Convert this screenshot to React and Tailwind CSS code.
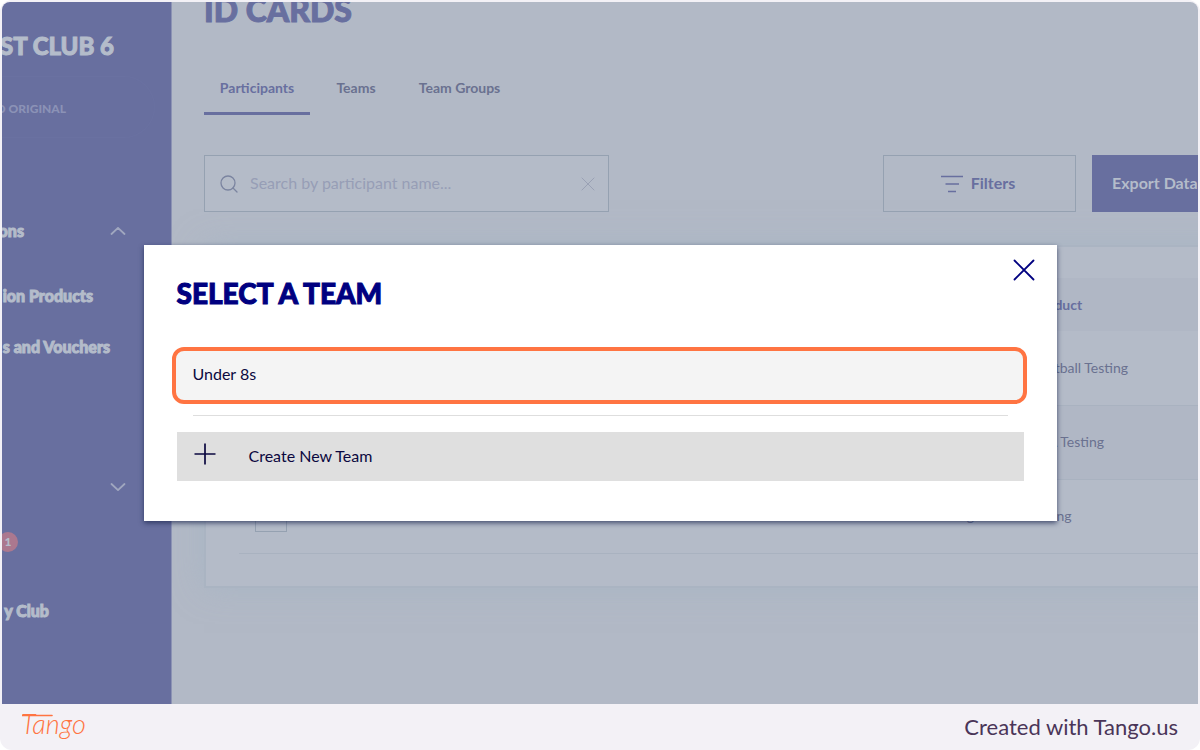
import React from "react";

const rows = [
  { product: "Membership Football Testing", tint: false },
  { product: "Membership CFA Testing", tint: true },
  { product: "Registration Testing", tint: false },
];

function Cross({ className, width }) {
  return (
    <svg className={className} viewBox="0 0 22 22" fill="none" stroke="currentColor" strokeWidth={width} strokeLinecap="round" aria-hidden="true">
      <path d="M1.5 1.5 20.5 20.5M20.5 1.5 1.5 20.5" />
    </svg>
  );
}

function Chevron({ up }) {
  return (
    <svg className="h-2 w-4 shrink-0 text-[#a0a7bf]" viewBox="0 0 16 8" fill="none" stroke="currentColor" strokeWidth="1.8" strokeLinecap="round" strokeLinejoin="round" aria-hidden="true">
      <path d={up ? "M1.5 7 8 .9 14.5 7" : "M1.5 1 8 7.1 14.5 1"} />
    </svg>
  );
}

function TangoLogo() {
  return (
    <svg className="h-[34px] w-[70px]" viewBox="0 0 70 34" fill="#ff7442" role="img" aria-label="Tango">
      <text x="-1" y="24" fontFamily="Lato, sans-serif" fontSize="27" fontStyle="italic" fontWeight="300">Tango</text>
      <path d="M0 5.500H30" stroke="#ff7442" strokeWidth="1.6" strokeLinecap="round" />
    </svg>
  );
}

function Sidebar() {
  return (
    <aside className="flex w-[170px] shrink-0 flex-col overflow-hidden border-r border-[#8c93b4] bg-[#686f9f] text-base font-black whitespace-nowrap text-[#b4bcca]">
      <div className="flex h-[74px] items-center justify-end pt-[14px] pr-[57px] text-2xl [-webkit-text-stroke:1px_currentColor]">ST CLUB 6</div>
      <div className="mr-[16px] flex h-[62px] items-center justify-end rounded-r-full border border-l-0 border-[#6a71a1] pt-1 pr-[88px] text-xs text-[#8b92b6]">
        D ORIGINAL
      </div>
      <nav className="flex flex-col [-webkit-text-stroke:1px_currentColor]">
        <button type="button" aria-label="Toggle section" className="mt-[81px] flex h-6 items-center pr-[45px]">
          <span className="flex w-[22px] justify-end">ons</span>
          <span className="ml-auto flex"><Chevron up /></span>
        </button>
        <a href="#products" className="mt-[41px] flex h-6 items-center justify-end pr-[78px]">ion Products</a>
        <a href="#vouchers" className="mt-[27px] flex h-6 items-center justify-end pr-[61px]">s and Vouchers</a>
        <button type="button" aria-label="Expand section" className="mt-[116px] flex h-6 items-center justify-end pr-[45px]">
          <Chevron />
        </button>
        <a href="#notifications" className="mt-[33px] -ml-1 flex size-5 items-center justify-center rounded-full bg-[#ab788f] text-xs [-webkit-text-stroke:0]">1</a>
        <a href="#club" className="mt-[47px] flex h-6 items-center justify-end pr-[122px]">y Club</a>
      </nav>
    </aside>
  );
}

function Background() {
  return (
    <main className="min-w-0 flex-1 overflow-hidden bg-[#b2b9c6] pl-8 text-[#6a7190]">
      <div className="-mr-[35px]">
        <h1 className="-mt-3 text-[32px] leading-[40px] font-black text-[#686f9f] [-webkit-text-stroke:1px_currentColor]">ID CARDS</h1>
        <div role="tablist" className="mt-[31px] flex text-sm font-bold">
          <button type="button" role="tab" aria-selected="true" className="h-[54px] w-[106px] border-b-3 border-[#686f9f] pt-[2px] text-[#686f9f]">Participants</button>
          <button type="button" role="tab" aria-selected="false" className="h-[54px] w-[92px] border-b-3 border-transparent pt-[2px]">Teams</button>
          <button type="button" role="tab" aria-selected="false" className="h-[54px] w-[115px] border-b-3 border-transparent pt-[2px]">Team Groups</button>
        </div>
        <div className="mt-[40px] flex gap-4">
          <div className="flex h-[57px] w-[405px] items-center border border-[#95a1b1] bg-[#b4bbc8] px-[15px]">
            <svg className="size-[18px] shrink-0 text-[#7b84a0]" viewBox="0 0 18 18" fill="none" stroke="currentColor" strokeWidth="1.3" strokeLinecap="round" aria-hidden="true">
              <circle cx="8" cy="8" r="7" />
              <path d="m13 13 4 4" />
            </svg>
            <input type="text" aria-label="Search by participant name" placeholder="Search by participant name..." className="ml-3 min-w-0 flex-1 bg-transparent pb-[2px] text-base outline-none placeholder:text-[#979eb6]" />
            <button type="button" aria-label="Clear search" className="mr-[-2px] p-0"><Cross className="size-[14px] text-[#98a0b3]" width="1.5" /></button>
          </div>
          <button type="button" className="ml-auto flex h-[57px] w-[193px] items-center justify-center gap-2 border border-[#95a1b1] pr-[3px] pb-[2px] text-base font-bold text-[#686f9f]">
            <svg className="mt-[2px] h-[18px] w-[22px]" viewBox="0 0 22 18" stroke="currentColor" strokeWidth="1.5" aria-hidden="true">
              <path d="M0 1.5h22M4.5 9h13.500M7 16.500h8" />
            </svg>
            Filters
          </button>
          <button type="button" className="h-[57px] w-[141px] bg-[#686f9f] pb-[2px] pl-5 text-left text-base font-bold text-[#b4bcca]">Export Data</button>
        </div>
        <div className="mt-[33px] border-2 border-[#aab4c2] bg-[#b4bbc8] pt-[31px] pb-8 pl-[33px] shadow-[0_0_30px_rgba(160,178,194,0.55)]">
          <table className="w-full table-fixed border-collapse text-left text-sm">
            <thead>
              <tr className="h-[53px] bg-[#b0b7c5] text-[#686f9f]">
                <th className="w-[712px]" aria-label="Select" />
                <th className="font-bold">Membership Product</th>
              </tr>
            </thead>
            <tbody>
              {rows.map((row) => (
                <tr key={row.product} className={row.tint ? "h-[74px] border-b border-[#a9b2c0] bg-[#b0b7c5]" : "h-[74px] border-b border-[#a9b2c0]"}>
                  <td className="pl-4">
                    <input type="checkbox" aria-label={row.product} className="block size-8 appearance-none border border-[#95a1b1]" />
                  </td>
                  <td className="whitespace-nowrap">{row.product}</td>
                </tr>
              ))}
            </tbody>
          </table>
        </div>
      </div>
    </main>
  );
}

function TeamDialog() {
  return (
    <div className="absolute inset-0 flex items-start justify-center pt-[243px]">
      <section role="dialog" aria-labelledby="dialog-title" className="w-[913px] max-w-full bg-white px-[33px] pb-10 text-base text-[#0b0840] shadow-[0_2px_5px_rgba(30,40,80,0.75)]">
        <header className="flex items-start justify-between pt-[14px]">
          <h2 id="dialog-title" className="pt-[14px] text-[28px] leading-[40px] font-black text-[#000080] [-webkit-text-stroke:1px_currentColor]">SELECT A TEAM</h2>
          <button type="button" aria-label="Close" className="-mr-[11px]"><Cross className="size-[22px] text-[#000080]" width="1.8" /></button>
        </header>
        <button type="button" className="-mx-[5px] mt-[34px] block h-[57px] w-[calc(100%+8px)] rounded-xl border-4 border-[#ff7442] bg-[#f4f4f4] px-[17px] pb-1 text-left">Under 8s</button>
        <hr className="mx-4 mt-[11px] border-[#dedede]" />
        <button type="button" className="mt-4 flex h-[49px] w-full items-center bg-[#dfdfdf] pb-[2px] pl-[17px] text-left">
          <svg className="mb-1 size-[22px]" viewBox="0 0 22 22" stroke="currentColor" strokeWidth="1.7" aria-hidden="true">
            <path d="M0.500 11h21M11 .5v21" />
          </svg>
          <span className="ml-[33px]">Create New Team</span>
        </button>
      </section>
    </div>
  );
}

export default function App() {
  return (
    <div className="min-h-screen bg-white font-['Lato',sans-serif]">
      <div className="flex min-h-screen flex-col rounded-xl bg-[#f3f1f6] px-[2px] pt-[2px]">
        <div className="relative flex flex-1 overflow-hidden rounded-t-lg">
          <Sidebar />
          <Background />
          <TeamDialog />
        </div>
        <footer className="flex h-[46px] items-center justify-between px-5 text-[#4a3558]">
          <TangoLogo />
          <span className="text-[22px] leading-[30px]">Created with Tango.us</span>
        </footer>
      </div>
    </div>
  );
}
